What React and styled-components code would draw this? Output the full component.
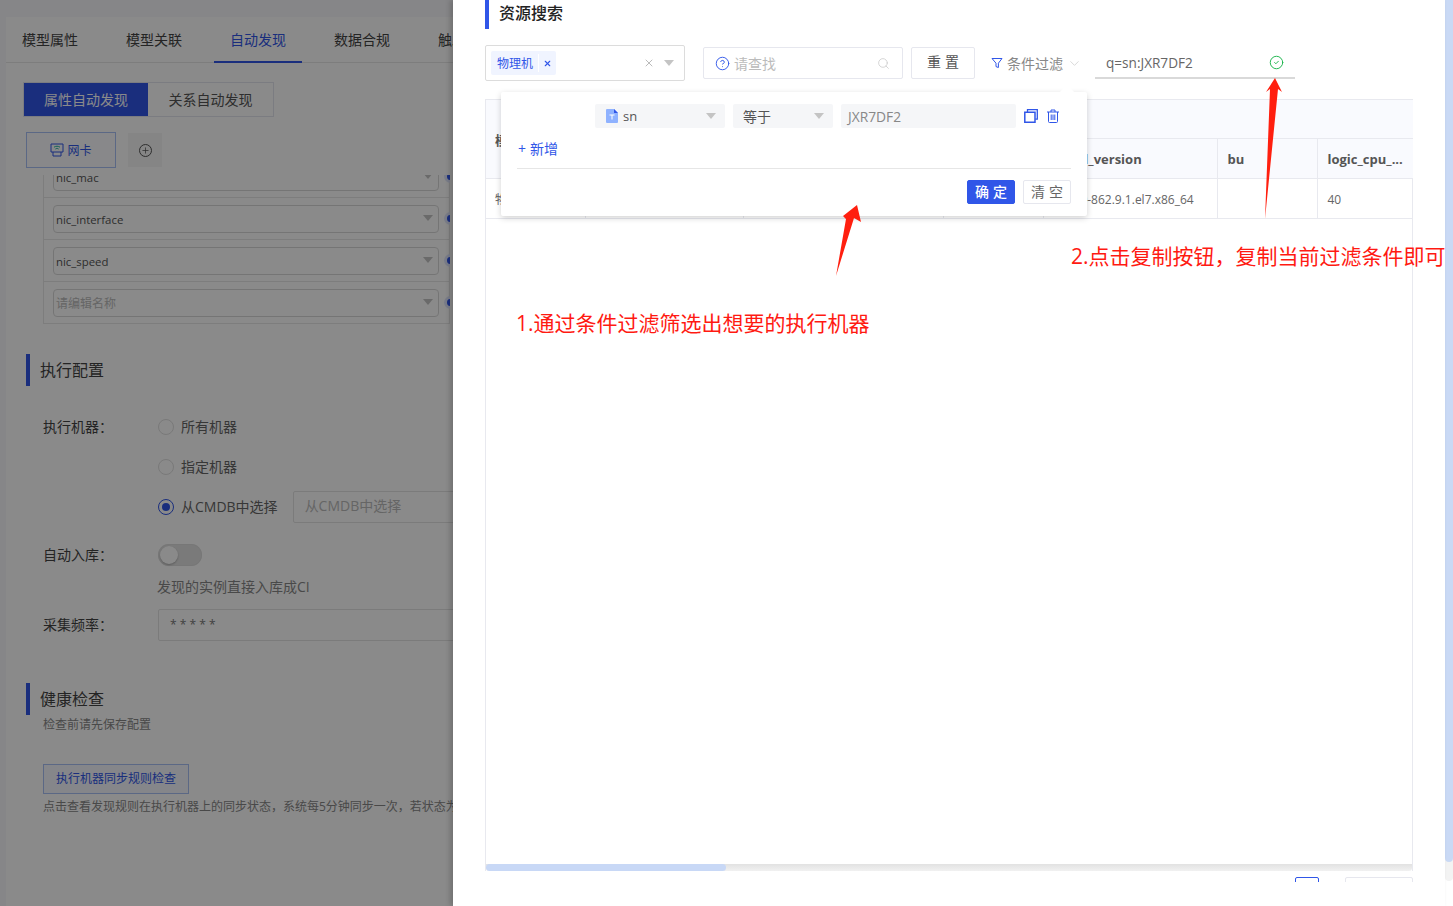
import React from "react";
import styled, { createGlobalStyle } from "styled-components";
import { CircleCheck, CircleHelp, ChevronDown, Search, Plus, X } from "lucide-react";

const Global = createGlobalStyle`
  html, body { margin: 0; padding: 0; background: #fff; }
  body { font-family: "Open Sans", "Noto Sans CJK SC", sans-serif; color: #333; overflow: hidden; }
  * { box-sizing: border-box; }
`;

const primary = "#3056e8";

const Screen = styled.div`
  display: flex;
  width: 1453px;
  height: 906px;
  overflow: hidden;
`;

/* ---------- left, dimmed page ---------- */
const Page = styled.div`
  position: relative;
  flex: 0 0 453px;
  height: 906px;
  overflow: hidden;
  background: #f7f8fb;
  padding: 17px 0 0 6px;
`;
const Mask = styled.div`
  position: absolute;
  inset: 0;
  background: rgba(0, 0, 0, 0.46);
  z-index: 5;
`;
const PagePanel = styled.div`
  width: 700px;
  height: 889px;
  background: #fff;
`;
const Tabs = styled.div`
  display: flex;
  gap: 16px;
  height: 46px;
  border-bottom: 1px solid #e8e8e8;
`;
const Tab = styled.div`
  flex: 0 0 88px;
  height: 46px;
  padding-top: 12px;
  text-align: center;
  font-size: 14px;
  line-height: 22px;
  color: ${(p) => (p.$active ? primary : "#444")};
  border-bottom: ${(p) => (p.$active ? `2px solid ${primary}` : "none")};
`;
const SubTabs = styled.div`
  display: flex;
  width: 251px;
  height: 35px;
  margin: 19px 0 0 17px;
  border: 1px solid #e4e6ee;
`;
const SubTab = styled.div`
  flex: ${(p) => (p.$active ? "0 0 124px" : "1")};
  display: flex;
  align-items: center;
  justify-content: center;
  padding-bottom: 2px;
  font-size: 14px;
  background: ${(p) => (p.$active ? primary : "#fff")};
  color: ${(p) => (p.$active ? "#fff" : "#555")};
`;
const NodeRow = styled.div`
  display: flex;
  align-items: center;
  gap: 12px;
  height: 36px;
  margin: 15px 0 0 20px;
`;
const NodeButton = styled.div`
  display: flex;
  align-items: center;
  justify-content: center;
  gap: 3px;
  width: 90px;
  height: 36px;
  border: 1px solid #a9c0f6;
  background: #fbfcff;
  color: ${primary};
  font-size: 12px;
`;
const AddButton = styled.div`
  display: flex;
  align-items: center;
  justify-content: center;
  width: 34px;
  height: 34px;
  background: #f5f5f5;
  color: #555;
`;
const AddRing = styled.span`
  display: flex;
  align-items: center;
  justify-content: center;
  width: 13px;
  height: 13px;
  border: 1px solid #555;
  border-radius: 50%;
`;
const MappingViewport = styled.div`
  height: 149px;
  margin: 7px 0 0 37px;
  width: 407px;
  overflow: hidden;
`;
const MappingBox = styled.div`
  margin-top: -19px;
  border: 1px solid #e8e8e8;
  border-top: none;
`;
const MappingRow = styled.div`
  position: relative;
  height: 42px;
  padding: 7px 10px 0 9px;
  border-bottom: 1px solid #e8e8e8;
`;
const FieldSelect = styled.div`
  position: relative;
  height: 28px;
  border: 1px solid #d9d9d9;
  border-radius: 4px;
  padding-left: 2px;
  font-size: ${(p) => (p.$placeholder ? 12 : 11.4)}px;
  line-height: 28px;
  color: ${(p) => (p.$placeholder ? "#bbb" : "#555")};
`;
const Caret = styled.i`
  display: block;
  flex: none;
  width: 0;
  height: 0;
  border-left: 5px solid transparent;
  border-right: 5px solid transparent;
  border-top: 6px solid #c4c4c4;
`;
const FieldCaret = styled(Caret)`
  position: absolute;
  right: 5px;
  top: 9px;
`;
const RowDot = styled.span`
  position: absolute;
  right: -5px;
  top: 17px;
  width: 7px;
  height: 7px;
  border-radius: 50%;
  background: ${primary};
  box-shadow: 0 0 0 3px #dfe6fc;
`;
const SectionHead = styled.div`
  width: 300px;
  height: 32px;
  margin: ${(p) => p.$top}px 0 0 20px;
  padding-left: 10px;
  border-left: 4px solid ${primary};
  font-size: 16px;
  line-height: 32px;
  color: #444;
`;
const FormRow = styled.div`
  display: flex;
  align-items: center;
  height: ${(p) => p.$h}px;
  margin: ${(p) => p.$top || 0}px 0 0 37px;
`;
const FormLabel = styled.div`
  flex: 0 0 115px;
  padding-bottom: 3px;
  font-size: 14px;
  color: #444;
`;
const Radio = styled.span`
  flex: 0 0 16px;
  width: 16px;
  height: 16px;
  margin-right: 7px;
  border-radius: 50%;
  border: 1px solid ${(p) => (p.$on ? primary : "#e0e0e0")};
  display: flex;
  align-items: center;
  justify-content: center;
  &::after {
    content: "";
    display: ${(p) => (p.$on ? "block" : "none")};
    width: 8px;
    height: 8px;
    border-radius: 50%;
    background: ${primary};
  }
`;
const RadioText = styled.span`
  padding-bottom: 2px;
  font-size: 14px;
  color: #666;
`;
const TextBox = styled.div`
  flex: 0 0 ${(p) => p.$w}px;
  height: 32px;
  margin-left: ${(p) => p.$left || 0}px;
  padding-left: ${(p) => p.$pad}px;
  border: 1px solid #e4e4e4;
  border-radius: 2px;
  font-size: ${(p) => p.$size}px;
  line-height: ${(p) => p.$line}px;
  color: ${(p) => p.$color};
`;
const Switch = styled.div`
  position: relative;
  width: 44px;
  height: 22px;
  border-radius: 11px;
  background: #e2e2e2;
  box-shadow: inset 0 0 0 1px #ddd;
  &::after {
    content: "";
    position: absolute;
    left: 2px;
    top: 2px;
    width: 18px;
    height: 18px;
    border-radius: 50%;
    background: #fff;
    box-shadow: 0 1px 2px rgba(0, 0, 0, 0.25);
  }
`;
const FormHelp = styled.div`
  margin: ${(p) => p.$top}px 0 0 ${(p) => p.$left}px;
  font-size: ${(p) => p.$size}px;
  line-height: 18px;
  color: #888;
  white-space: nowrap;
`;
const CheckButton = styled.div`
  width: 146px;
  height: 30px;
  margin: 30px 0 0 37px;
  border: 1px solid #a9c0f6;
  background: #f5f8ff;
  color: ${primary};
  font-size: 12px;
  line-height: 28px;
  text-align: center;
`;

/* ---------- right drawer ---------- */
const Drawer = styled.div`
  position: relative;
  flex: 0 0 992px;
  height: 906px;
  background: #fff;
  box-shadow: -3px 0 5px rgba(0, 0, 0, 0.18);
  z-index: 6;
`;
const DrawerBody = styled.div`
  height: 882px;
  padding-left: 32px;
  overflow: hidden;
`;
const DrawerTitle = styled.div`
  height: 29px;
  width: 200px;
  padding-left: 10px;
  border-left: 4px solid ${primary};
  font-size: 16px;
  font-weight: 500;
  line-height: 27px;
  color: #222;
`;
const Toolbar = styled.div`
  display: flex;
  align-items: center;
  height: 36px;
  margin-top: 16px;
`;
const TypeSelect = styled.div`
  display: flex;
  align-items: center;
  width: 200px;
  height: 36px;
  padding: 0 10px 0 5px;
  border: 1px solid #dcdcdc;
  border-radius: 2px;
`;
const Tag = styled.div`
  display: flex;
  align-items: center;
  width: 65px;
  height: 24px;
  padding-left: 6px;
  border-radius: 2px;
  background: #f0f4ff;
  color: ${primary};
  font-size: 12px;
`;
const TagRule = styled.span`
  width: 1px;
  height: 18px;
  margin: 0 4px 0 5px;
  background: #fff;
`;
const Spacer = styled.span`
  flex: 1;
`;
const ClearSlot = styled.span`
  display: flex;
  margin-right: 9px;
  color: #bbb;
`;
const SearchBox = styled.div`
  display: flex;
  align-items: center;
  width: 200px;
  height: 32px;
  margin-left: 18px;
  padding: 0 12px 0 11px;
  border: 1px solid #e6e7ee;
  border-radius: 2px;
  color: #bbb;
  font-size: 14px;
`;
const SearchText = styled.span`
  flex: 1;
  margin-left: 4px;
`;
const ResetButton = styled.div`
  width: 64px;
  height: 32px;
  margin-left: 8px;
  padding-left: 4px;
  border: 1px solid #e6e7ee;
  border-radius: 2px;
  font-size: 14px;
  line-height: 28px;
  text-align: center;
  letter-spacing: 4px;
  color: #555;
`;
const FilterToggle = styled.div`
  display: flex;
  align-items: center;
  width: 104px;
  margin-left: 16px;
  font-size: 14px;
  color: #888;
`;
const FilterLabel = styled.span`
  margin: 0 4px 0 4px;
`;
const QueryField = styled.div`
  display: flex;
  align-items: center;
  justify-content: space-between;
  width: 200px;
  height: 32px;
  padding: 1px 11px 0 11px;
  border-bottom: 2px solid #d9d9d9;
  font-size: 13.6px;
  color: #666;
`;
const TableBox = styled.div`
  width: 928px;
  height: 772px;
  margin-top: 18px;
  position: relative;
  border: 1px solid #e8e9ef;
  border-bottom: none;
`;
const DataTable = styled.table`
  width: 927px;
  table-layout: fixed;
  border-collapse: collapse;
`;
const Th = styled.th`
  height: ${(p) => p.$h}px;
  padding: 2px 10px 0 ${(p) => p.$pad ?? 10}px;
  background: #f9fafe;
  border: 1px solid #e8e9ef;
  border-top: none;
  font-size: 13px;
  font-weight: 700;
  color: #555;
  text-align: left;
  white-space: nowrap;
  &:first-child { border-left: none; }
  &:last-child { border-right: none; }
`;
const Td = styled.td`
  height: 40px;
  padding: 2px 10px 0 ${(p) => p.$pad ?? 10}px;
  border: 1px solid #e8e9ef;
  font-size: 12px;
  color: #666;
  white-space: nowrap;
  &:first-child { border-left: none; }
  &:last-child { border-right: none; }
`;
const HScroll = styled.div`
  position: absolute;
  left: 0;
  right: 0;
  bottom: 0;
  height: 7px;
  border-radius: 0 0 3px 3px;
  background: linear-gradient(#e2e2e2, #f1f1f1);
`;
const HThumb = styled.div`
  width: 240px;
  height: 7px;
  border-radius: 4px;
  background: #c8d8f6;
`;
const Pager = styled.div`
  display: flex;
  justify-content: flex-end;
  gap: 26px;
  width: 928px;
  margin-top: 6px;
`;
const PagerBox = styled.div`
  width: ${(p) => p.$w}px;
  height: 32px;
  border: 1px solid ${(p) => (p.$on ? primary : "#e6e7ee")};
  border-radius: 2px;
`;
const PageScroll = styled.div`
  flex: 0 0 8px;
  height: 881px;
  background: #f3f3f3;
  border-radius: 0 0 4px 4px;
`;
const PageThumb = styled.div`
  width: 8px;
  height: 862px;
  background: #c9d9f5;
  border-radius: 0 0 4px 4px;
`;

/* ---------- filter popover ---------- */
const Popover = styled.div`
  position: absolute;
  left: 48px;
  top: 92px;
  width: 586px;
  height: 124px;
  padding: 12px 16px 0;
  background: #fff;
  border-radius: 2px;
  box-shadow: 0 2px 6px rgba(0, 0, 0, 0.18);
  z-index: 2;
  &::before {
    content: "";
    position: absolute;
    right: 15px;
    top: -5px;
    width: 10px;
    height: 10px;
    background: #fff;
    transform: rotate(45deg);
  }
`;
const ConditionRow = styled.div`
  display: flex;
  align-items: center;
  height: 24px;
  padding-left: 78px;
`;
const ConditionField = styled.div`
  display: flex;
  align-items: center;
  flex: 0 0 ${(p) => p.$w}px;
  height: 24px;
  margin-right: 8px;
  padding: 0 ${(p) => p.$right ?? p.$pad}px 0 ${(p) => p.$pad}px;
  background: #f5f6f8;
  border-radius: 2px;
  font-size: ${(p) => (p.$value ? 13.8 : 14)}px;
  color: ${(p) => (p.$value ? "#888" : "#555")};
`;
const FieldName = styled.span`
  flex: 1;
  margin-left: ${(p) => p.$gap}px;
  padding-bottom: 1px;
  font-size: ${(p) => p.$size}px;
`;
const IconSlot = styled.span`
  display: flex;
  margin-right: ${(p) => p.$right}px;
  color: ${primary};
`;
const AddLink = styled.div`
  display: flex;
  align-items: center;
  gap: 4px;
  margin: 12px 0 0 1px;
  height: 18px;
  font-size: 14px;
  line-height: 18px;
  color: ${primary};
`;
const Rule = styled.div`
  margin-top: 10px;
  height: 1px;
  background: #e6e6e6;
`;
const PopActions = styled.div`
  display: flex;
  justify-content: flex-end;
  gap: 8px;
  margin-top: 11px;
`;
const PopButton = styled.div`
  width: 48px;
  height: 24px;
  padding-left: 4px;
  border-radius: 2px;
  border: 1px solid ${(p) => (p.$primary ? primary : "#e6e7ee")};
  background: ${(p) => (p.$primary ? primary : "#fff")};
  color: ${(p) => (p.$primary ? "#fff" : "#666")};
  font-size: 14px;
  font-weight: ${(p) => (p.$primary ? 500 : 400)};
  line-height: 21px;
  letter-spacing: 4px;
  text-align: center;
`;

/* ---------- annotations ---------- */
const Note = styled.div`
  position: absolute;
  left: ${(p) => p.$x}px;
  top: ${(p) => p.$y}px;
  font-size: 21px;
  line-height: 28px;
  color: #ff1a12;
  white-space: nowrap;
  z-index: 4;
`;
const ArrowLayer = styled.svg`
  position: absolute;
  left: 0;
  top: 0;
  width: 992px;
  height: 906px;
  pointer-events: none;
  z-index: 4;
`;

const NicIcon = () => (
  <svg width="14" height="14" viewBox="0 0 14 14" fill="none">
    <path d="M1 1h12v8H1z" stroke="#3056e8" />
    <path d="M4 4.2c1.8-1.3 4.2-1.3 6 0M5.4 6c1-.7 2.2-.7 3.2 0" stroke="#22b8a0" />
    <path d="M3 9v4h8V9" stroke="#3056e8" />
  </svg>
);
const FunnelIcon = () => (
  <svg width="12" height="12" viewBox="0 0 12 12" fill="none">
    <path d="M1 1.5h10L7.4 6.2v4.3L5 9.6V6.2z" stroke="#3056e8" strokeWidth="1" />
  </svg>
);
const CopyIcon = () => (
  <svg width="14" height="14" viewBox="0 0 14 14" fill="none">
    <path d="M3.5 3V.7h9.8v9.4h-2" stroke="#3056e8" strokeWidth="1.3" />
    <path d="M.8 3.2h10.2v10H.8z" stroke="#3056e8" strokeWidth="1.5" />
  </svg>
);
const BinIcon = () => (
  <svg width="12" height="14" viewBox="0 0 12 14" fill="none" stroke="#3056e8" strokeWidth="1">
    <path d="M0 3h12M4 3V1h4v2M1.5 3v9.5a1 1 0 0 0 1 1h7a1 1 0 0 0 1-1V3M4.2 5.5v5.5M6 5.5v5.5M7.8 5.5v5.5" />
  </svg>
);
const FieldTypeIcon = () => (
  <svg width="12" height="14" viewBox="0 0 12 14">
    <path d="M0 1a1 1 0 0 1 1-1h7l4 4v9a1 1 0 0 1-1 1H1a1 1 0 0 1-1-1z" fill="#8fb2ff" />
    <path d="M8 0l4 4H8z" fill="#3056e8" />
    <path d="M3.5 5.5h5v1H6.5v4h-1v-4h-2z" fill="#fff" />
  </svg>
);

const rows = [
  { name: "nic_mac" },
  { name: "nic_interface" },
  { name: "nic_speed" },
  { name: "请编辑名称", placeholder: true },
];

export default function App() {
  return (
    <Screen>
      <Global />
      <Page>
        <PagePanel>
          <Tabs>
            <Tab>模型属性</Tab>
            <Tab>模型关联</Tab>
            <Tab $active>自动发现</Tab>
            <Tab>数据合规</Tab>
            <Tab>触发策略</Tab>
          </Tabs>
          <SubTabs>
            <SubTab $active>属性自动发现</SubTab>
            <SubTab>关系自动发现</SubTab>
          </SubTabs>
          <NodeRow>
            <NodeButton>
              <NicIcon />
              网卡
            </NodeButton>
            <AddButton>
              <AddRing>
                <Plus size={9} strokeWidth={2} />
              </AddRing>
            </AddButton>
          </NodeRow>
          <MappingViewport>
            <MappingBox>
              {rows.map((r) => (
                <MappingRow key={r.name}>
                  <FieldSelect $placeholder={r.placeholder}>
                    {r.name}
                    <FieldCaret />
                  </FieldSelect>
                  <RowDot />
                </MappingRow>
              ))}
            </MappingBox>
          </MappingViewport>
          <SectionHead $top={30}>执行配置</SectionHead>
          <FormRow $h={40} $top={21}>
            <FormLabel>{"执行机器\uFF1A"}</FormLabel>
            <Radio />
            <RadioText>所有机器</RadioText>
          </FormRow>
          <FormRow $h={40}>
            <FormLabel />
            <Radio />
            <RadioText>指定机器</RadioText>
          </FormRow>
          <FormRow $h={40}>
            <FormLabel />
            <Radio $on />
            <RadioText>从CMDB中选择</RadioText>
            <TextBox $w={300} $left={15} $pad={11} $line={28} $size={14} $color="#bbb">
              从CMDB中选择
            </TextBox>
          </FormRow>
          <FormRow $h={22} $top={17}>
            <FormLabel>{"自动入库\uFF1A"}</FormLabel>
            <Switch />
          </FormRow>
          <FormHelp $top={12} $left={151} $size={14}>
            发现的实例直接入库成CI
          </FormHelp>
          <FormRow $h={32} $top={13}>
            <FormLabel>{"采集频率\uFF1A"}</FormLabel>
            <TextBox $w={400} $pad={11} $line={30} $size={12} $color="#777">
              * * * * *
            </TextBox>
          </FormRow>
          <SectionHead $top={42}>健康检查</SectionHead>
          <FormHelp $top={1} $left={37} $size={12}>
            检查前请先保存配置
          </FormHelp>
          <CheckButton>执行机器同步规则检查</CheckButton>
          <FormHelp $top={4} $left={37} $size={12}>
            {"点击查看发现规则在执行机器上的同步状态\uFF0C系统每5分钟同步一次\uFF0C若状态为异常请检查配置"}
          </FormHelp>
        </PagePanel>
        <Mask />
      </Page>

      <Drawer>
        <DrawerBody>
          <DrawerTitle>资源搜索</DrawerTitle>
          <Toolbar>
            <TypeSelect>
              <Tag>
                物理机
                <TagRule />
                <X size={9} strokeWidth={3} />
              </Tag>
              <Spacer />
              <ClearSlot>
                <X size={12} strokeWidth={2} />
              </ClearSlot>
              <Caret />
            </TypeSelect>
            <SearchBox>
              <CircleHelp size={15} color={primary} strokeWidth={1.5} />
              <SearchText>请查找</SearchText>
              <Search size={13} color="#ccc" strokeWidth={1.5} />
            </SearchBox>
            <ResetButton>重置</ResetButton>
            <FilterToggle>
              <FunnelIcon />
              <FilterLabel>条件过滤</FilterLabel>
              <ChevronDown size={15} color="#ccc" strokeWidth={1.2} />
            </FilterToggle>
            <QueryField>
              q=sn:JXR7DF2
              <CircleCheck size={15} color="#19b34a" strokeWidth={1.5} />
            </QueryField>
          </Toolbar>
          <TableBox>
            <DataTable>
              <colgroup>
                <col width="99" />
                <col width="158" />
                <col width="200" />
                <col width="100" />
                <col width="174" />
                <col width="100" />
                <col width="96" />
              </colgroup>
              <thead>
                <tr>
                  <Th $h={38} $pad={9} rowSpan={2}>模型</Th>
                  <Th $h={38} colSpan={6}>基础属性</Th>
                </tr>
                <tr>
                  <Th $h={40}>hostname</Th>
                  <Th $h={40}>private_ip</Th>
                  <Th $h={40}>sn</Th>
                  <Th $h={40} $pad={3}>kernel_version</Th>
                  <Th $h={40}>bu</Th>
                  <Th $h={40}>logic_cpu_...</Th>
                </tr>
              </thead>
              <tbody>
                <tr>
                  <Td $pad={9}>物理机</Td>
                  <Td>host-01</Td>
                  <Td>10.0.0.1</Td>
                  <Td>JXR7DF2</Td>
                  <Td>3.10.0-862.9.1.el7.x86_64</Td>
                  <Td />
                  <Td>40</Td>
                </tr>
              </tbody>
            </DataTable>
            <HScroll>
              <HThumb />
            </HScroll>
          </TableBox>
          <Pager>
            <PagerBox $w={24} $on />
            <PagerBox $w={68} />
          </Pager>
        </DrawerBody>

        <Popover>
          <ConditionRow>
            <ConditionField $w={130} $pad={11} $right={9}>
              <FieldTypeIcon />
              <FieldName $gap={5} $size={13}>sn</FieldName>
              <Caret />
            </ConditionField>
            <ConditionField $w={100} $pad={10} $right={9}>
              <FieldName $gap={0} $size={14}>等于</FieldName>
              <Caret />
            </ConditionField>
            <ConditionField $w={175} $pad={7} $value>
              JXR7DF2
            </ConditionField>
            <IconSlot $right={9}>
              <CopyIcon />
            </IconSlot>
            <IconSlot $right={0}>
              <BinIcon />
            </IconSlot>
          </ConditionRow>
          <AddLink>
            <span>+</span>
            <span>新增</span>
          </AddLink>
          <Rule />
          <PopActions>
            <PopButton $primary>确定</PopButton>
            <PopButton>清空</PopButton>
          </PopActions>
        </Popover>

        <Note $x={63} $y={309}>1.通过条件过滤筛选出想要的执行机器</Note>
        <Note $x={618} $y={242}>{"2.点击复制按钮\uFF0C复制当前过滤条件即可"}</Note>
        <ArrowLayer viewBox="0 0 992 906">
          <polygon points="404,205 408,222 401,218 383,276 393,219 390,216" fill="#ff1f0f" />
          <polygon points="822,78 829,92 825,89 812,219 817,89 813,92" fill="#ff1f0f" />
        </ArrowLayer>
      </Drawer>
      <PageScroll>
        <PageThumb />
      </PageScroll>
    </Screen>
  );
}
